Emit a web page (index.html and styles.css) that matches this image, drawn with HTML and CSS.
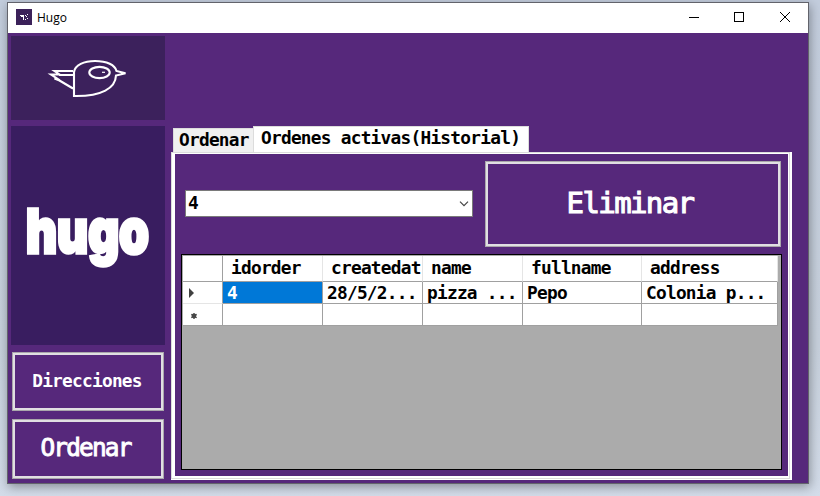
FILE: index.html
```html
<!DOCTYPE html>
<html lang="es">
<head>
<meta charset="utf-8">
<title>Hugo</title>
<link rel="stylesheet" href="styles.css">
</head>
<body>
<main class="window">
  <header class="titlebar">
    <svg class="app-icon" width="16" height="16" viewBox="0 0 16 16"><path fill="#3b2159" d="M0 0h16v16H0z"/><path fill="#fff" d="M4 6h4v1H4zM5 7h3v1H5zM7 8h1v3H7zM9 6h1v1H9zM11 5h1v1h-1zM10 7h1v1h-1zM9 10h1v1H9zM11 9h1v1h-1z"/></svg>
    <span class="title">Hugo</span>
    <svg class="controls" width="104" height="12" viewBox="0 0 104 12" fill="none" stroke="#000" shape-rendering="crispEdges"><path d="M0 6.500h10M45.500 1.500h9v9h-9z"/><path shape-rendering="auto" d="M91 1l10 10M101 1L91 11"/></svg>
  </header>
  <div class="content">
    <aside class="sidebar">
      <div class="bird">
        <svg width="154" height="84" viewBox="11 36 154 84" fill="none" stroke="#fff" stroke-width="2.100"><path d="M74 96V72C75 65 84 61 95 61c12 0 20 4 21.500 10l9 2.200-9.500 2.300C115.500 88 102 96.500 74 96zM73 71H54.500l5 3.500H51l6 4H54.500l5 2L73 88.500M59 75h14"/><ellipse cx="99.500" cy="72.500" rx="10.200" ry="5.600"/><path d="M102 72.300h3" stroke-width="1.200"/></svg>
      </div>
      <div class="brand">
        <svg width="154" height="219" viewBox="11 126 154 219"><text class="wordmark" x="26" y="252.600" textLength="123" lengthAdjust="spacingAndGlyphs">hugo</text></svg>
      </div>
      <button class="btn directions">Direcciones</button>
      <button class="btn order">Ordenar</button>
    </aside>
    <section class="tabs">
      <div class="tablist"><span class="tab">Ordenar</span><span class="tab active">Ordenes activas(Historial)</span></div>
      <div class="frame"><div class="page">
        <div class="toolbar">
          <div class="combo"><span>4</span><svg width="10" height="6" viewBox="0 0 10 6" fill="none" stroke="#444" stroke-width="1.200"><path d="M1 .7l4 4 4-4"/></svg></div>
          <button class="btn delete">Eliminar</button>
        </div>
        <div class="grid">
          <div class="row head"><span></span><span>idorder</span><span>createdat</span><span>name</span><span>fullname</span><span>address</span></div>
          <div class="row"><span class="mark"><svg width="5" height="10" viewBox="0 0 5 10"><path fill="#404040" d="M0 0l5 5-5 5z"/></svg></span><span class="selected">4</span><span>28/5/2...</span><span>pizza ...</span><span>Pepo</span><span>Colonia p...</span></div>
          <div class="row"><span class="mark new"><svg width="6" height="6" viewBox="0 0 6 6"><path stroke="#555" stroke-width="1.300" d="M3 0v6M.3 1.300l5.400 3.400M5.700 1.300L.3 4.700"/><circle cx="3" cy="3" r="2.400" fill="#484848"/></svg></span><span></span><span></span><span></span><span></span><span></span></div>
        </div>
      </div></div>
    </section>
  </div>
</main>
</body>
</html>
```
FILE: styles.css
```css
* { box-sizing: border-box; }
body {
  margin: 0;
  width: 820px;
  height: 496px;
  padding: 2px 11px 12px 7px;
  overflow: hidden;
  background: linear-gradient(180deg, #c3cddd, #c7d0dc 70%, #d3dce9);
  font: bold 17.8px/22px "DejaVu Sans Mono", monospace;
  letter-spacing: -.74px;
  color: #000;
}
.window {
  width: 802px;
  height: 482px;
  border: 1px solid #62636b;
  background: #56287b;
  box-shadow: 1px 3px 10px rgba(0, 0, 0, .35);
}
.titlebar {
  display: flex;
  align-items: center;
  height: 30px;
  padding: 0 17px 0 8px;
  background: #fff;
  font: 12px/16px "Open Sans", "Noto Sans", sans-serif;
  letter-spacing: 0;
}
.title { margin: 0 auto 0 5px; }
.app-icon { margin-bottom: 2px; }
.controls { margin: 0 -2px 2px 0; }
.content { display: flex; height: 450px; }
.sidebar { width: 163px; padding: 3px 0 0 3px; }
.bird, .brand { width: 154px; margin-bottom: 6px; background: #3c215c; }
.bird { height: 84px; }
.brand { height: 219px; background: #391d60; margin-bottom: 7px; }
.bird svg, .brand svg { display: block; }
.wordmark { font: 900 61px Inter, sans-serif; letter-spacing: 0; fill: #fff; stroke: #fff; stroke-width: 3.6px; }
.btn {
  display: block;
  padding: 0 0 2px;
  border: 1px solid #a9a7ab;
  background: #56287b;
  box-shadow: inset 0 0 0 2px #e1dfe3;
  color: #fff;
  font: bold 17.8px/20px "DejaVu Sans Mono", monospace;
  letter-spacing: -.74px;
  white-space: nowrap;
}
.sidebar .btn { width: 152px; margin-left: 1px; }
.directions { height: 59px; padding-right: 2px; }
.sidebar .order { height: 60px; margin-top: 8px; padding-right: 5px; font-size: 24.4px; letter-spacing: -1.8px; font-weight: normal; -webkit-text-stroke: .9px #fff; }
.tabs { width: 621px; padding-top: 93px; }
.tablist { display: flex; align-items: flex-end; height: 26px; padding-left: 2px; }
.tab { width: 80px; height: 24px; padding-left: 5px; border: 1px solid #dcdcdc; border-width: 1px 0 0 1px; background: #f0f0f0; line-height: 22px; white-space: nowrap; }
.tab.active { width: 276px; height: 26px; padding-left: 7px; border-right-width: 1px; background: #fff; }
.frame { height: 328px; border: solid #fff; border-width: 0 2px 1px 0; }
.page {
  height: 327px;
  padding: 7px 6px 0;
  border: 1px solid #dcdcdc;
  background: #56287b;
  box-shadow: inset 3px 1px #fff, inset -1px -2px #fff;
}
.toolbar { display: flex; align-items: flex-start; height: 94px; padding: 1px 0 0 7px; }
.combo { display: flex; align-items: center; justify-content: space-between; width: 288px; height: 27px; margin-top: 29px; padding: 0 3px 2px 2px; border: 1px solid #7a7a7a; background: #fff; }
.combo svg { margin-top: 3px; }
.delete { width: 296px; height: 86px; margin-left: 12px; padding-right: 6px; font-size: 29px; letter-spacing: -1.6px; font-weight: normal; -webkit-text-stroke: 1.1px #fff; }
.grid { width: 601px; height: 216px; margin: 0 0 0 3px; border: 1px solid #000; background: #ababab; padding: 1px 0 0 1px; }
.row { display: grid; grid-template-columns: 40px 100px 100px 100px 119px 136px; width: 595px; height: 22px; background: #fff; }
.row span { overflow: hidden; padding-left: 4px; border-right: 1px solid #a0a0a0; border-bottom: 1px solid #a0a0a0; line-height: 22px; white-space: nowrap; }
.row.head { height: 26px; }
.row.head span { padding-left: 8px; border-right-color: #e5e5e5; line-height: 24px; }
.row.head span:first-child { border-right-color: #a0a0a0; }
.row .mark { display: flex; align-items: center; padding: 1px 0 0 6px; border-bottom-color: #e5e5e5; }
.row .new { padding: 2px 0 0 8px; border-bottom-color: #a0a0a0; }
.row .selected { background: #0078d7; color: #fff; }
```
